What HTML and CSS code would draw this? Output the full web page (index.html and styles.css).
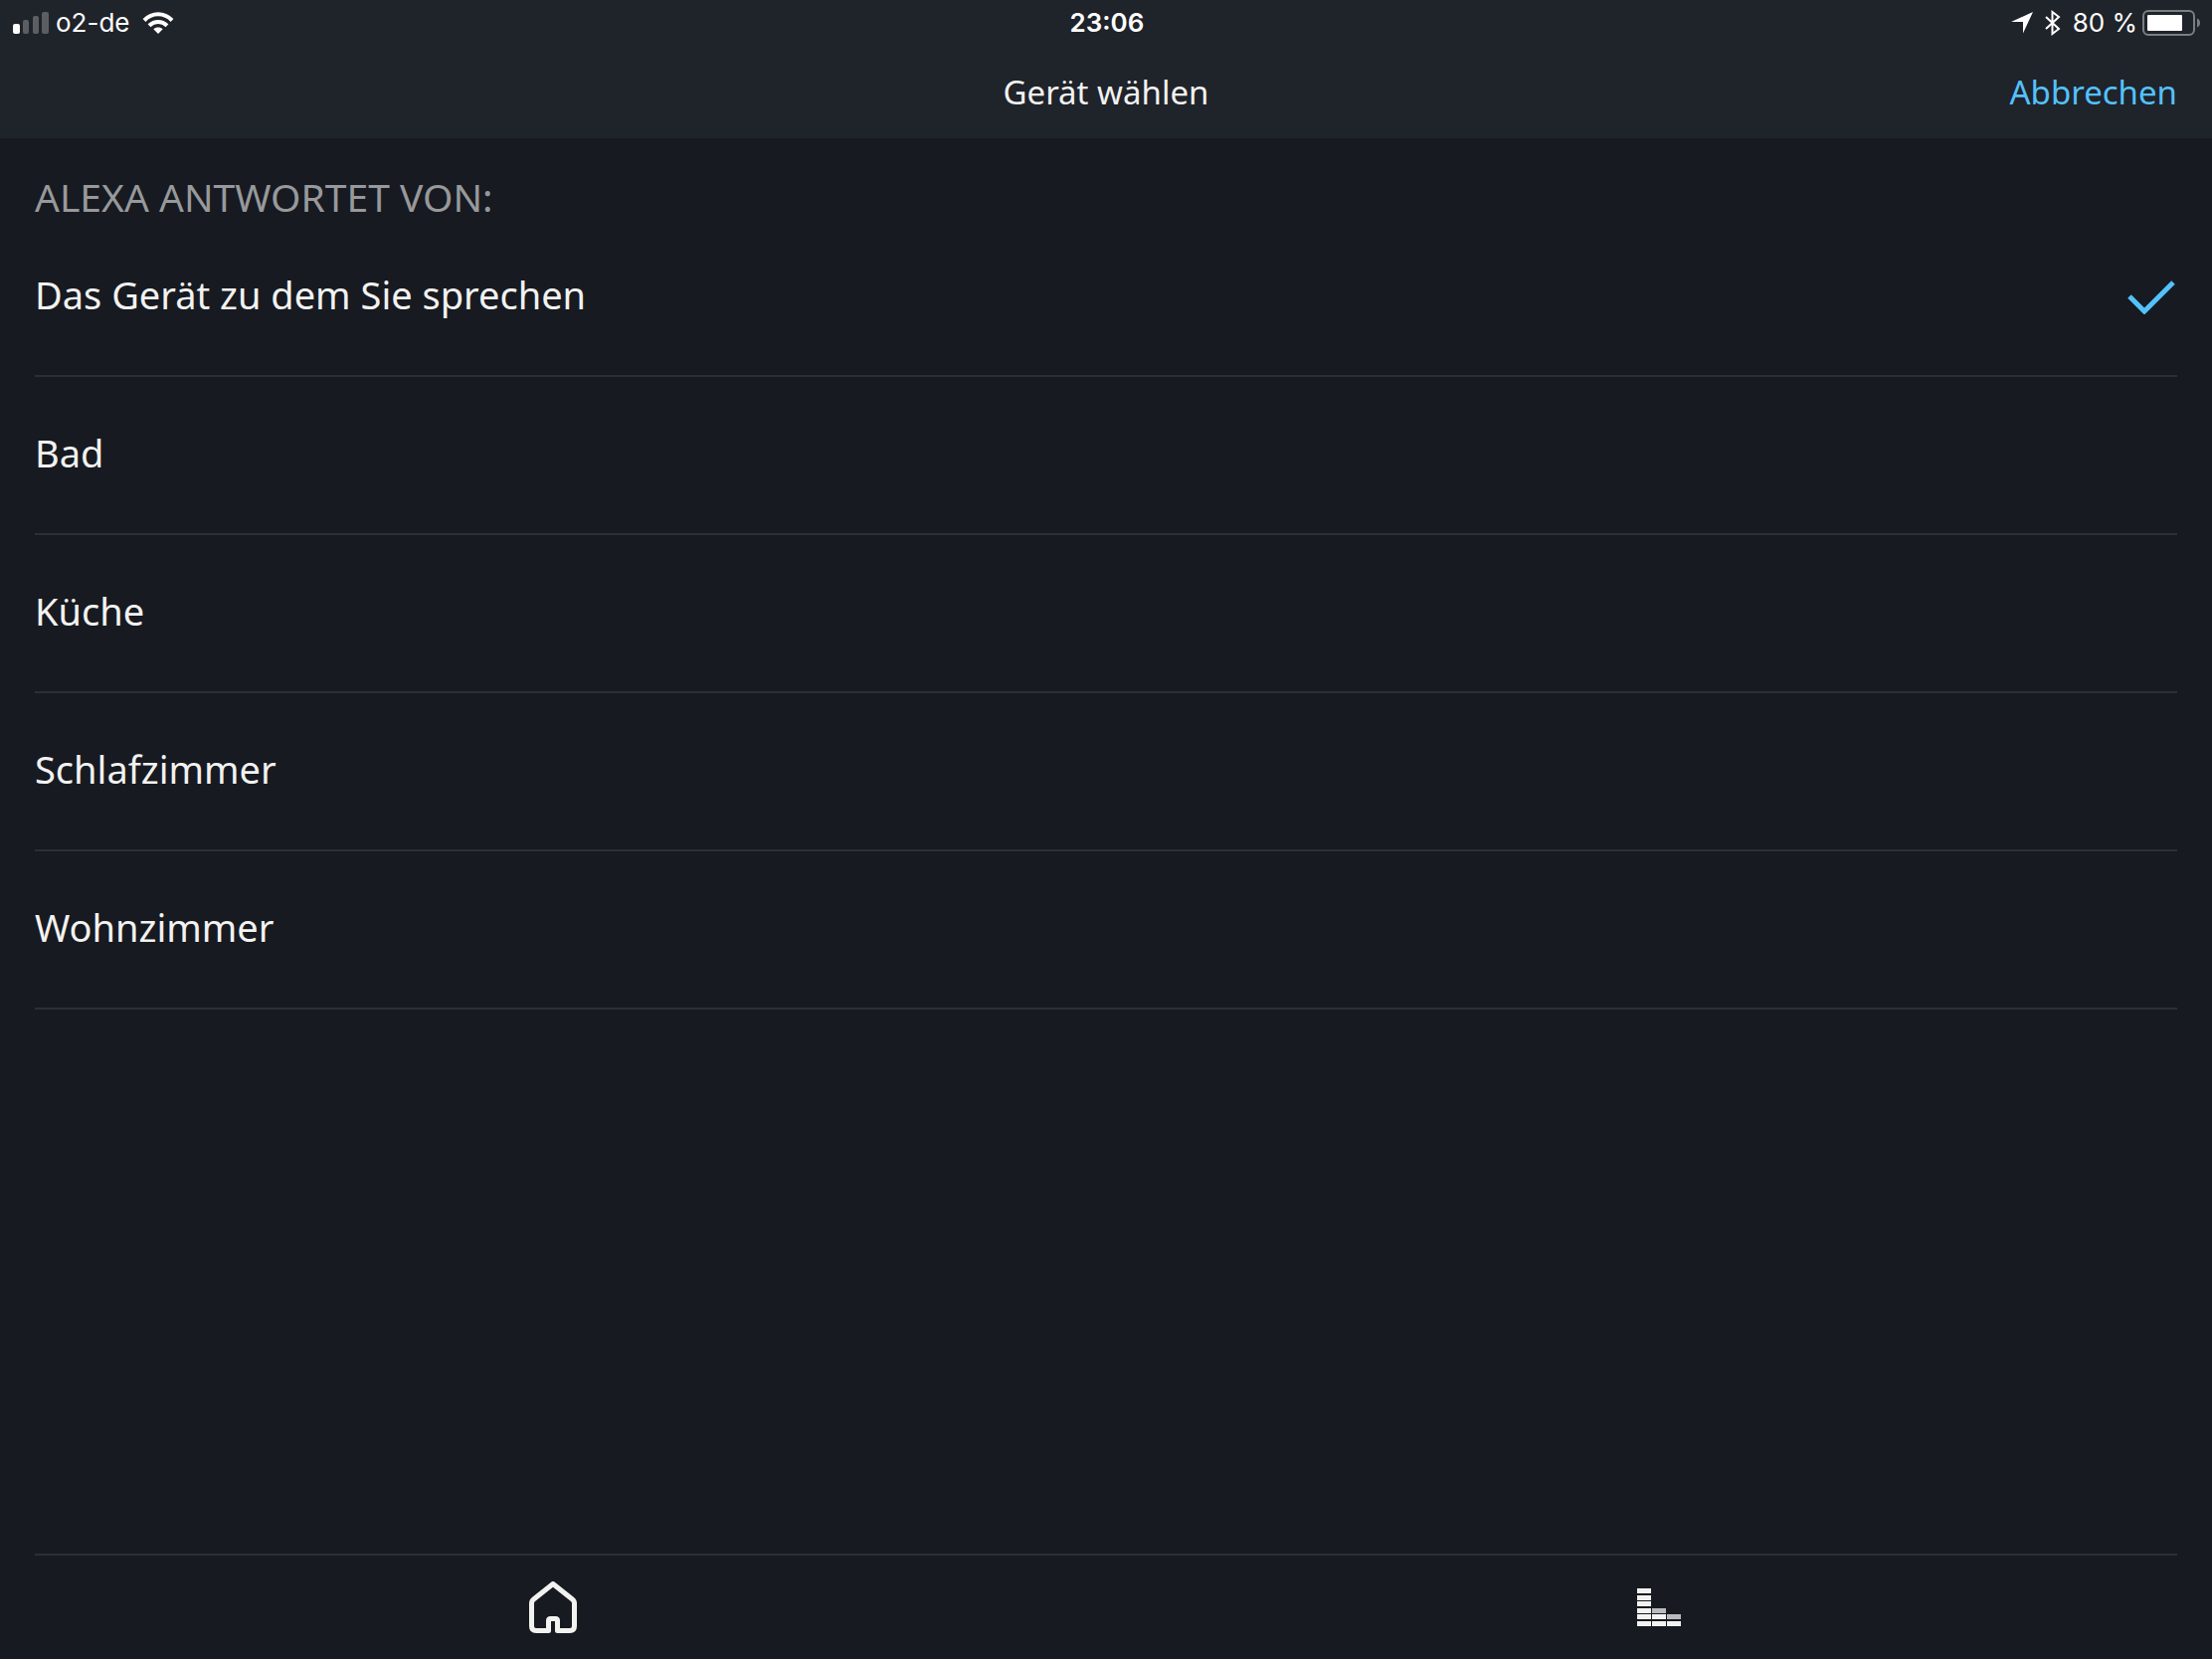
FILE: index.html
```html
<!DOCTYPE html>
<html lang="de">
<head>
    <meta charset="UTF-8">
    <meta name="viewport" content="width=device-width, initial-scale=1.0">
    <title>Gerät wählen</title>
    <link rel="stylesheet" href="styles.css">
</head>
<body>
    <header class="top">
        <!-- Status bar -->
        <div class="status">
            <div class="status-left">
                <svg width="36" height="22" viewBox="0 0 36 22">
                    <rect x="0" y="12" width="7" height="10" rx="2" fill="#fff"/>
                    <rect x="10" y="8" width="6" height="14" rx="2" fill="#5b5f64"/>
                    <rect x="20" y="4" width="6" height="18" rx="2" fill="#5b5f64"/>
                    <rect x="29" y="0" width="7" height="22" rx="2" fill="#5b5f64"/>
                </svg>
                <span class="carrier">o2-de</span>
                <svg width="32" height="22" viewBox="0 0 32 22">
                    <path d="M2 8.5C10 .3 22 .3 30 8.5" fill="none" stroke="#fff" stroke-width="4"/>
                    <path d="M7 13.7C12.3 8.6 19.7 8.6 25 13.7" fill="none" stroke="#fff" stroke-width="4"/>
                    <path d="M16 22l-4.7-4.7c2.6-2.4 6.8-2.4 9.4 0z" fill="#fff"/>
                </svg>
            </div>
            <time class="clock">23:06</time>
            <div class="status-right">
                <svg width="22" height="22" viewBox="0 0 22 22">
                    <path d="M22 0L12 21.5V10H0z" fill="#fff"/>
                </svg>
                <svg class="bluetooth" width="16" height="26" viewBox="0 0 16 26">
                    <path d="M1 7l13 12-6.5 5V2L14 7 1 19" fill="none" stroke="#fff" stroke-width="2"/>
                </svg>
                <span class="percent">80 %</span>
                <svg width="59" height="26" viewBox="0 0 59 26">
                    <rect x="1" y="1" width="51" height="24" rx="5" fill="none" stroke="#7b7e82" stroke-width="2"/>
                    <rect x="5" y="5" width="35" height="16" rx="1" fill="#fff"/>
                    <path d="M55 8.5c4 1.5 4 7.5 0 9z" fill="#7b7e82"/>
                </svg>
            </div>
        </div>
        <!-- Title bar -->
        <div class="titlebar">
            <h1>Gerät wählen</h1>
            <button type="button" class="cancel">Abbrechen</button>
        </div>
    </header>

    <main class="content">
        <form>
            <fieldset class="devices">
                <legend>ALEXA ANTWORTET VON:</legend>
                <label class="device">
                    <input type="radio" name="device" value="auto" checked>
                    <span>Das Gerät zu dem Sie sprechen</span>
                    <svg class="check" width="48" height="40" viewBox="0 0 48 40">
                        <path d="M2 22l15 15L46 8" fill="none" stroke="#54c1fb" stroke-width="5"/>
                    </svg>
                </label>
                <label class="device">
                    <input type="radio" name="device" value="bad">
                    <span>Bad</span>
                </label>
                <label class="device">
                    <input type="radio" name="device" value="kueche">
                    <span>Küche</span>
                </label>
                <label class="device">
                    <input type="radio" name="device" value="schlafzimmer">
                    <span>Schlafzimmer</span>
                </label>
                <label class="device">
                    <input type="radio" name="device" value="wohnzimmer">
                    <span>Wohnzimmer</span>
                </label>
            </fieldset>
        </form>
    </main>

    <!-- Tab bar -->
    <hr class="divider">
    <nav class="tabs">
        <button type="button" aria-label="Startseite">
            <svg width="48" height="52" viewBox="0 0 48 52">
                <path d="M24 2.5L4.5 18Q2.5 19.5 2.5 22V45Q2.5 49.5 7 49.5H19.5V39.5Q19.5 37.5 21.5 37.5H26.5Q28.5 37.5 28.5 39.5V49.5H41Q45.5 49.5 45.5 45V22Q45.5 19.5 43.5 18Z" fill="none" stroke="#f2f2f0" stroke-width="5" stroke-linejoin="round"/>
                <path d="M22 47h4v5h-4z" fill="#171a21"/>
            </svg>
        </button>
        <button type="button" aria-label="Wiedergabe">
            <svg width="44" height="38" viewBox="0 0 44 38" fill="#f2f2f0">
                <rect x="0" y="0" width="14" height="5"/>
                <rect x="0" y="7" width="14" height="5"/>
                <rect x="0" y="13" width="14" height="5"/>
                <rect x="0" y="20" width="14" height="5"/>
                <rect x="0" y="26" width="14" height="5"/>
                <rect x="0" y="33" width="14" height="5"/>
                <rect x="15" y="20" width="14" height="5" fill="#b9babb"/>
                <rect x="15" y="26" width="14" height="5"/>
                <rect x="15" y="33" width="14" height="5"/>
                <rect x="30" y="26" width="14" height="5" fill="#b9babb"/>
                <rect x="30" y="33" width="14" height="5"/>
            </svg>
        </button>
    </nav>
</body>
</html>
```
FILE: styles.css
```css
* {
    box-sizing: border-box;
}
body {
    margin: 0;
    min-height: 100vh;
    display: flex;
    flex-direction: column;
    background-color: #171a21;
    color: #f2f2f0;
    font-family: "Noto Sans", "Open Sans", sans-serif;
    font-size: 38px;
}
svg {
    display: block;
    flex: none;
}
button {
    padding: 0;
    border: none;
    background: none;
    color: inherit;
    font: inherit;
    cursor: pointer;
}
.top {
    background-color: #1f232a;
}
.status {
    display: grid;
    grid-template-columns: 1fr auto 1fr;
    align-items: center;
    height: 45px;
    padding: 0 11px 0 13px;
    color: #fff;
    font-family: Inter, sans-serif;
    font-size: 26px;
}
.status-left, .status-right {
    display: flex;
    align-items: center;
}
.status-right {
    justify-content: flex-end;
}
.carrier {
    margin: 0 13px 0 7px;
}
.clock {
    font-weight: 600;
}
.bluetooth {
    margin: 0 12px;
}
.percent {
    margin-right: 5px;
}
.titlebar {
    display: grid;
    grid-template-columns: 1fr auto 1fr;
    align-items: center;
    height: 94px;
    padding: 0 35px;
    font-size: 33px;
}
.titlebar h1 {
    grid-column: 2;
    margin: 0;
    font-size: inherit;
    font-weight: 400;
}
.cancel {
    justify-self: end;
    color: #54c1fb;
}
.content {
    flex: 1;
    padding: 0 35px;
}
.devices {
    margin: 0;
    padding: 0;
    border: none;
}
.devices legend {
    padding: 37px 0 0;
    font-size: 39px;
    line-height: 44px;
    color: #97999b;
}
.device {
    display: flex;
    align-items: center;
    justify-content: space-between;
    height: 159px;
    padding-bottom: 5px;
    border-bottom: 2px solid #2c2f34;
    cursor: pointer;
}
.device input {
    position: absolute;
    opacity: 0;
}
.check {
    margin-right: 2px;
}
.divider {
    height: 2px;
    margin: 0 35px;
    border: none;
    background-color: #2c2f34;
}
.tabs {
    display: grid;
    grid-template-columns: 1fr 1fr;
    height: 104px;
}
.tabs button {
    display: flex;
    align-items: center;
    justify-content: center;
}
```
